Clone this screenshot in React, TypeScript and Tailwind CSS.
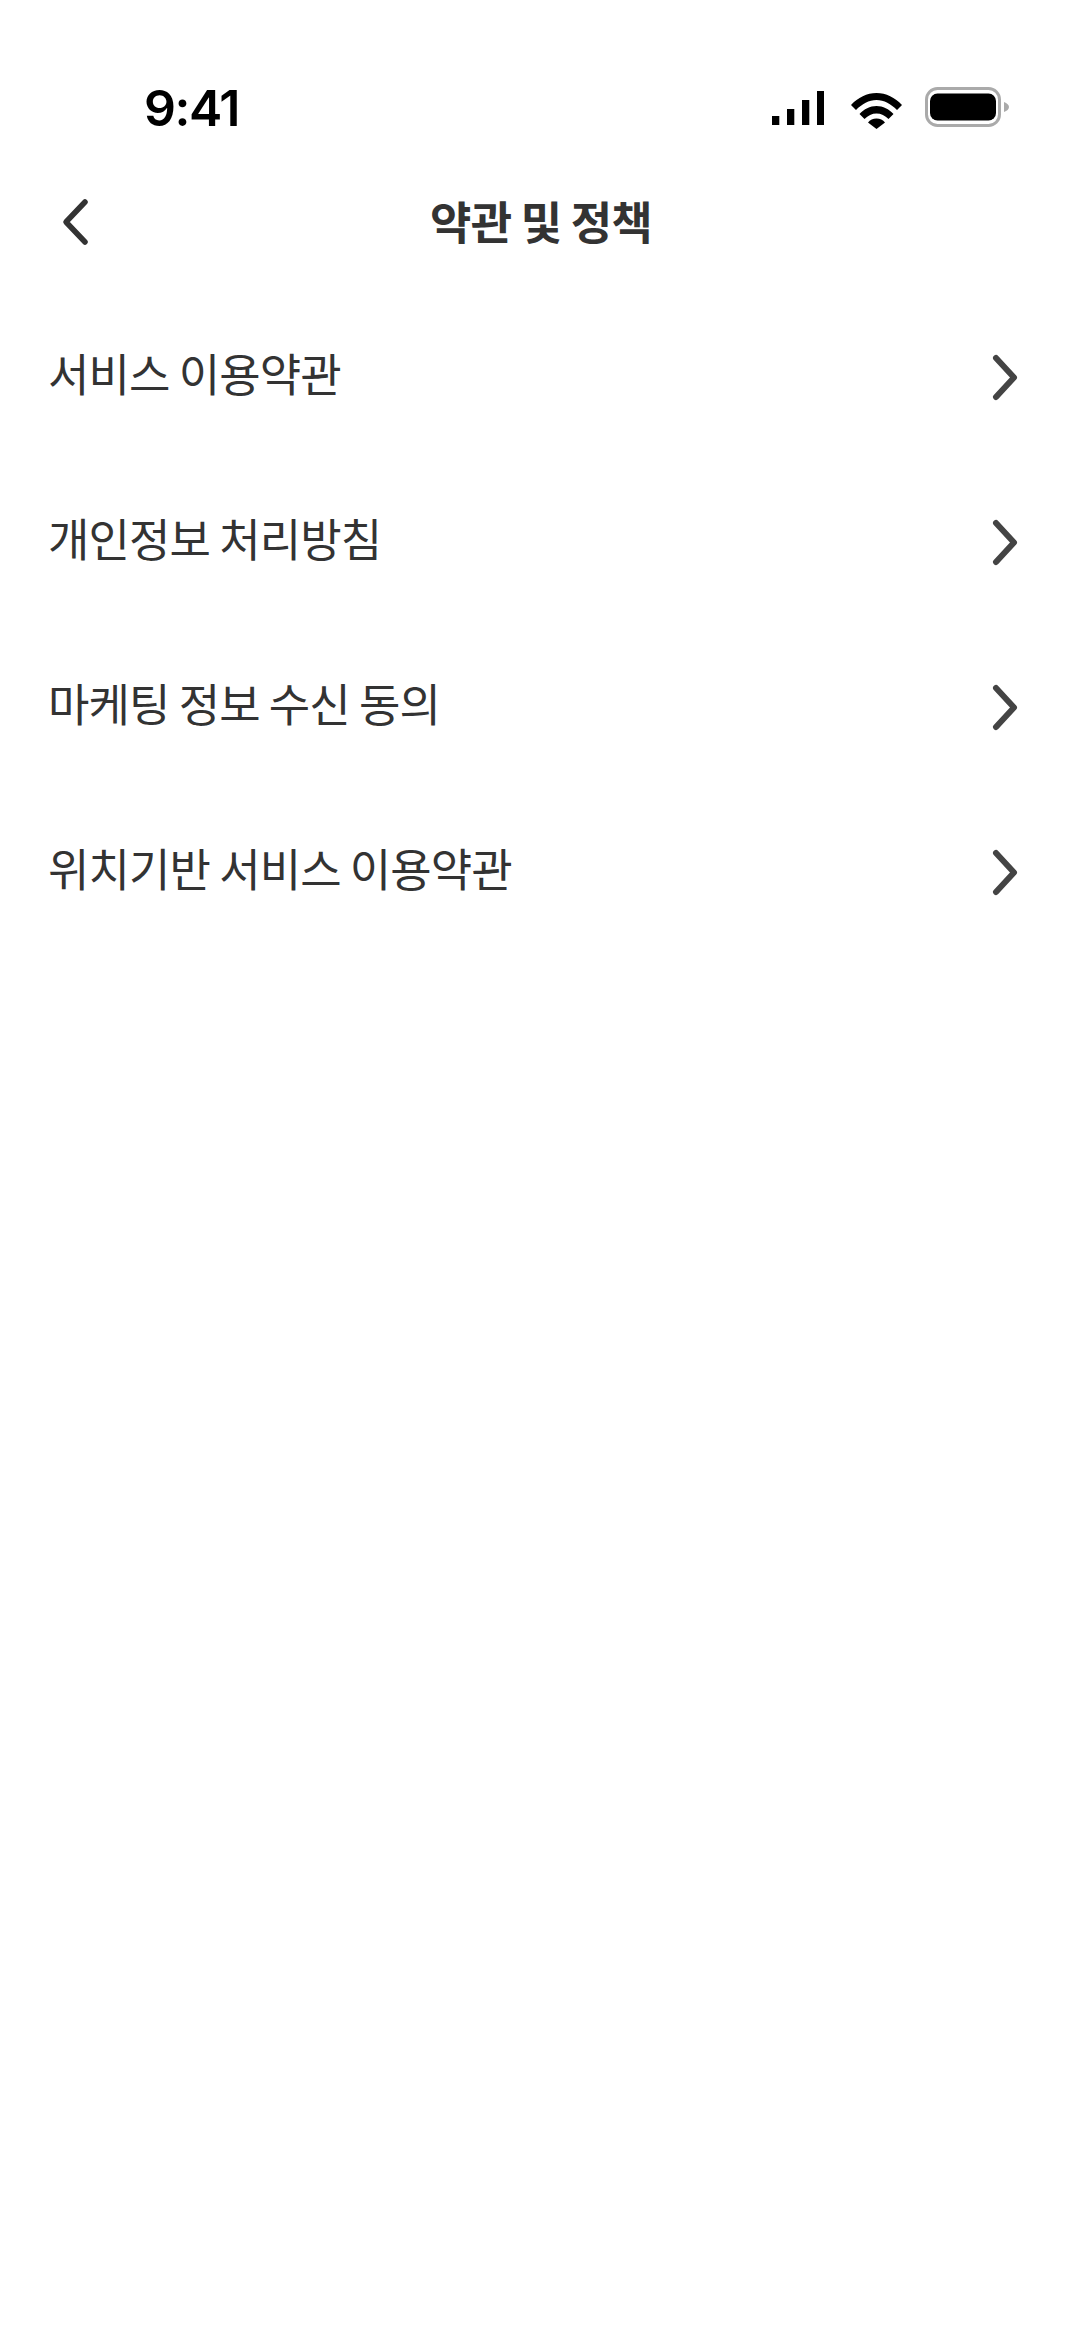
const terms = [
  "서비스 이용약관",
  "개인정보 처리방침",
  "마케팅 정보 수신 동의",
  "위치기반 서비스 이용약관",
];

const korean = "font-['Noto_Sans_CJK_KR','Noto_Sans',sans-serif]";

function StatusIcons() {
  return (
    <div className="flex items-end gap-[27px]">
      <svg width="52" height="34" viewBox="0 0 52 34" className="mb-[3px]">
        <rect x="0" y="25" width="7.3" height="9" />
        <rect x="15" y="18" width="7.3" height="16" />
        <rect x="30" y="9" width="7.3" height="25" />
        <rect x="45" y="0" width="7.3" height="34" />
      </svg>
      <svg width="51" height="36" viewBox="0 0 51 36" className="-mb-[1px]">
        <path d="M0 12C7 4.5 16 0 25.5 0C35 0 44 4.5 51 12L46 17C40 11 33 7 25.5 7C18 7 11 11 5 17Z" />
        <path d="M8.5 21C13 16 19 13 25.5 13C32 13 38 16 42.5 21L37.5 26C34 22.5 30 20.5 25.5 20.5C21 20.5 17 22.5 13.5 26Z" />
        <path d="M17 29.5C19 27 22 25.5 25.5 25.5C29 25.5 32 27 34 29.5L25.5 36Z" />
      </svg>
      <svg width="84" height="40" viewBox="0 0 84 40" className="-ml-[4px] mb-[1px]">
        <rect x="1.5" y="1.5" width="73" height="37" rx="11" fill="none" stroke="#aaaaaa" strokeWidth="3" />
        <rect x="5" y="6.5" width="66" height="27" rx="7.5" fill="#000" />
        <path d="M79 15C82 16 84 18 84 20C84 22 82 24 79 25Z" fill="#aaaaaa" />
      </svg>
    </div>
  );
}

export default function App() {
  return (
    <div className={`w-[1080px] h-[2340px] bg-white text-[#333333] ${korean}`}>
      <div className="h-[162px] flex justify-between items-start pt-[80px] pl-[144px] pr-[71px]">
        <span className="font-['Inter'] font-semibold text-[50px] leading-[56px] tracking-[-1.5px] text-black">9:41</span>
        <div className="pt-[7px]">
          <StatusIcons />
        </div>
      </div>

      <div className="h-[120px] relative flex items-center justify-center">
        <svg width="32" height="52" viewBox="0 0 32 52" className="absolute left-[60px] top-[34px]" fill="none" stroke="#333333" strokeWidth="5.5" strokeLinecap="round" strokeLinejoin="round">
          <path d="M25 6L6 26L25 46" />
        </svg>
        <h1 className="text-[45px] font-bold tracking-[-0.8px] -mt-[3px] ml-[2px]">약관 및 정책</h1>
      </div>

      <ul className="pt-[13px]">
        {terms.map((t) => (
          <li key={t} className="h-[165px] flex items-center justify-between pl-[48px] pr-[60px]">
            <span className="text-[45px] tracking-[-0.9px] -mt-[9px]">{t}</span>
            <svg width="30" height="50" viewBox="0 0 30 50" fill="none" stroke="#444444" strokeWidth="6" strokeLinecap="round" strokeLinejoin="round">
              <path d="M6 5L24 24.5L6 44" />
            </svg>
          </li>
        ))}
      </ul>
    </div>
  );
}
